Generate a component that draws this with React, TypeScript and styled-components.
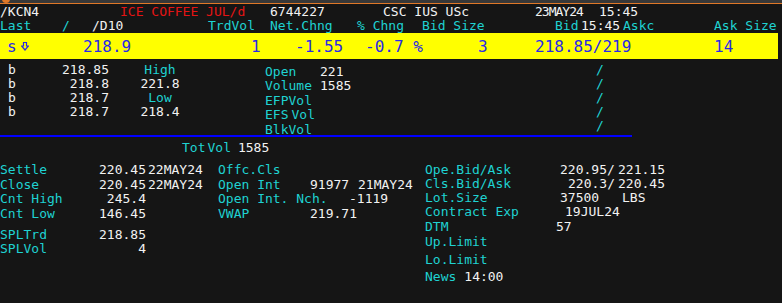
import styled, { createGlobalStyle } from 'styled-components'

const C = {
  bg: '#151515',
  cyan: '#1fd2d2',
  white: '#f2f2f2',
  red: '#e41414',
  yellow: '#ffff00',
  blue: '#2a2ae6',
  line: '#0000ff',
}

const GlobalStyle = createGlobalStyle`
  html, body {
    margin: 0;
    padding: 0;
    background: ${C.bg};
  }
  body {
    width: 782px;
    height: 303px;
    overflow: hidden;
    font-family: 'DejaVu Sans Mono', 'Liberation Mono', monospace;
    font-size: 13px;
  }
`

const Screen = styled.div`
  width: 782px;
  height: 303px;
  background: ${C.bg};
  display: flex;
  flex-direction: column;
  overflow: hidden;
`

const TopBar = styled.div`
  height: 3px;
  background: #383838;
  border-bottom: 1px solid #e07828;
  display: flex;
  flex-shrink: 0;
  overflow: hidden;

  &::before {
    content: '';
    width: 8px;
    height: 8px;
    margin: -5px 0 0 2px;
    border-radius: 50%;
    background: #e07828;
  }
`

const Row = styled.div<{ $h: number; $pl?: number }>`
  display: flex;
  align-items: center;
  height: ${(p) => p.$h}px;
  padding-left: ${(p) => p.$pl ?? 0}px;
  white-space: pre;
  flex-shrink: 0;
`

type Tone = 'cyan' | 'white' | 'red' | 'blue'

const Cell = styled.span<{ $w?: number; $c?: Tone; $align?: 'left' | 'right' | 'center'; $ml?: number }>`
  display: inline-block;
  width: ${(p) => (p.$w ? `${p.$w}px` : 'auto')};
  margin-left: ${(p) => p.$ml ?? 0}px;
  text-align: ${(p) => p.$align ?? 'left'};
  color: ${(p) => C[p.$c ?? 'white']};
  flex-shrink: 0;
`

const Narrow = styled(Cell)`
  letter-spacing: -1px;
`

const QuoteBar = styled.div`
  width: 778px;
  height: 26px;
  margin-top: 1px;
  background: ${C.yellow};
  display: flex;
  align-items: center;
  padding-left: 7px;
  box-sizing: border-box;
  font-size: 16px;
  white-space: pre;
  flex-shrink: 0;
`

const ArrowBox = styled.span`
  display: inline-flex;
  width: 63px;
  align-items: center;
  padding-left: 1px;
  box-sizing: border-box;
`

const Stats = styled.div`
  display: flex;
  height: 76px;
  flex-shrink: 0;
`

const Col = styled.div<{ $w?: number; $pt: number; $pl?: number }>`
  display: flex;
  flex-direction: column;
  width: ${(p) => (p.$w ? `${p.$w}px` : 'auto')};
  padding-top: ${(p) => p.$pt}px;
  padding-left: ${(p) => p.$pl ?? 0}px;
  box-sizing: border-box;
  flex-shrink: 0;
`

const Rule = styled.div`
  width: 632px;
  height: 2px;
  background: ${C.line};
  flex-shrink: 0;
`

const Bottom = styled.div`
  display: flex;
  padding-top: 5px;
`

const Gap = styled.div<{ $h: number }>`
  height: ${(p) => p.$h}px;
  flex-shrink: 0;
`

const DownArrow = () => (
  <svg width="8" height="9" viewBox="0 0 8 9">
    <path d="M2.5 0.5 H5.5 V4 H7.5 L4 8 L0.5 4 H2.5 Z" fill="none" stroke={C.blue} strokeWidth="1.2" />
  </svg>
)

const depth = [
  ['218.85', 'High', 'label'],
  ['218.8', '221.8', 'value'],
  ['218.7', 'Low', 'label'],
  ['218.7', '218.4', 'value'],
]

const dayStats: [string, string][] = [
  ['Open', '221'],
  ['Volume', '1585'],
  ['EFPVol', ''],
  ['EFS', ''],
  ['BlkVol', ''],
]

export default function App() {
  return (
    <Screen>
      <GlobalStyle />
      <TopBar />

      <Row $h={15}>
        <Cell $w={120}>/KCN4</Cell>
        <Cell $w={150} $c="red">ICE COFFEE JUL/d</Cell>
        <Cell $w={113}>6744227</Cell>
        <Cell $w={152}>CSC IUS USc</Cell>
        <Narrow $w={64}>23MAY24</Narrow>
        <Cell>15:45</Cell>
      </Row>

      <Row $h={13}>
        <Cell $w={62} $c="cyan">Last</Cell>
        <Cell $w={30} $c="cyan">/</Cell>
        <Cell $w={116}>/D10</Cell>
        <Cell $w={62} $c="cyan">TrdVol</Cell>
        <Cell $w={87} $c="cyan">Net.Chng</Cell>
        <Cell $w={65} $c="cyan">% Chng</Cell>
        <Cell $w={133} $c="cyan">Bid Size</Cell>
        <Cell $w={26} $c="cyan">Bid</Cell>
        <Cell $w={42}>15:45</Cell>
        <Cell $w={91} $c="cyan">Askc</Cell>
        <Cell $c="cyan">Ask Size</Cell>
      </Row>

      <QuoteBar>
        <Cell $w={13} $c="blue">s</Cell>
        <ArrowBox>
          <DownArrow />
        </ArrowBox>
        <Cell $w={168} $c="blue">218.9</Cell>
        <Cell $w={44} $c="blue">1</Cell>
        <Cell $w={70} $c="blue">-1.55</Cell>
        <Cell $w={113} $c="blue">-0.7 %</Cell>
        <Cell $w={57} $c="blue">3</Cell>
        <Cell $w={179} $c="blue">218.85/219</Cell>
        <Cell $c="blue">14</Cell>
      </QuoteBar>

      <Stats>
        <Col $w={265} $pt={3} $pl={8}>
          {depth.map(([px, right, kind], i) => (
            <Row key={i} $h={14}>
              <Cell $w={54}>b</Cell>
              <Cell $w={47} $align="right">{px}</Cell>
              <Cell $w={31} />
              <Cell $w={40} $align="center" $c={kind === 'label' ? 'cyan' : 'white'}>
                {right}
              </Cell>
            </Row>
          ))}
        </Col>
        <Col $w={331} $pt={5}>
          {dayStats.map(([label, value]) => (
            <Row key={label} $h={14.5}>
              {label === 'EFS' ? (
                <Cell $w={55} $c="cyan">
                  EFS<Cell $ml={3} $c="cyan">Vol</Cell>
                </Cell>
              ) : (
                <Cell $w={55} $c="cyan">{label}</Cell>
              )}
              <Cell>{value}</Cell>
            </Row>
          ))}
        </Col>
        <Col $pt={3}>
          {[0, 1, 2, 3, 4].map((i) => (
            <Row key={i} $h={14}>
              <Cell $c="cyan">/</Cell>
            </Row>
          ))}
        </Col>
      </Stats>

      <Rule />

      <Row $h={20} $pl={182}>
        <Cell $c="cyan">Tot</Cell>
        <Cell $c="cyan" $ml={2}>Vol</Cell>
        <Cell $ml={7}>1585</Cell>
      </Row>

      <Bottom>
        <Col $w={218} $pt={0}>
          <Row $h={14.7}>
            <Cell $w={98} $c="cyan">Settle</Cell>
            <Cell $w={48} $align="right">220.45</Cell>
            <Cell $ml={2}>22MAY24</Cell>
          </Row>
          <Row $h={14.7}>
            <Cell $w={98} $c="cyan">Close</Cell>
            <Cell $w={48} $align="right">220.45</Cell>
            <Cell $ml={2}>22MAY24</Cell>
          </Row>
          <Row $h={14.7}>
            <Cell $w={98} $c="cyan">Cnt High</Cell>
            <Cell $w={48} $align="right">245.4</Cell>
          </Row>
          <Row $h={14.7}>
            <Cell $w={98} $c="cyan">Cnt Low</Cell>
            <Cell $w={48} $align="right">146.45</Cell>
          </Row>
          <Gap $h={6} />
          <Row $h={14.7}>
            <Cell $w={98} $c="cyan">SPLTrd</Cell>
            <Cell $w={48} $align="right">218.85</Cell>
          </Row>
          <Row $h={14.7}>
            <Cell $w={98} $c="cyan">SPLVol</Cell>
            <Cell $w={48} $align="right">4</Cell>
          </Row>
        </Col>

        <Col $w={207} $pt={0}>
          <Row $h={14.7}>
            <Cell $c="cyan">Offc.Cls</Cell>
          </Row>
          <Row $h={14.7}>
            <Cell $w={92} $c="cyan">Open Int</Cell>
            <Cell $w={48}>91977</Cell>
            <Cell>21MAY24</Cell>
          </Row>
          <Row $h={14.7}>
            <Cell $w={131} $c="cyan">Open Int. Nch.</Cell>
            <Cell>-1119</Cell>
          </Row>
          <Row $h={14.7}>
            <Cell $w={92} $c="cyan">VWAP</Cell>
            <Cell>219.71</Cell>
          </Row>
        </Col>

        <Col $pt={0}>
          <Row $h={14}>
            <Cell $w={135} $c="cyan">Ope.Bid/Ask</Cell>
            <Cell $w={58}>220.95/</Cell>
            <Cell>221.15</Cell>
          </Row>
          <Row $h={14}>
            <Cell $w={143} $c="cyan">Cls.Bid/Ask</Cell>
            <Cell $w={50}>220.3/</Cell>
            <Cell>220.45</Cell>
          </Row>
          <Row $h={14}>
            <Cell $w={135} $c="cyan">Lot.Size</Cell>
            <Cell $w={62}>37500</Cell>
            <Cell>LBS</Cell>
          </Row>
          <Row $h={14}>
            <Cell $w={140} $c="cyan">Contract Exp</Cell>
            <Cell>19JUL24</Cell>
          </Row>
          <Row $h={16}>
            <Cell $w={131} $c="cyan">DTM</Cell>
            <Cell>57</Cell>
          </Row>
          <Row $h={14}>
            <Cell $c="cyan">Up.Limit</Cell>
          </Row>
          <Gap $h={4} />
          <Row $h={14}>
            <Cell $c="cyan">Lo.Limit</Cell>
          </Row>
          <Gap $h={3} />
          <Row $h={14}>
            <Cell $c="cyan">News</Cell>
            <Cell $ml={8}>14:00</Cell>
          </Row>
        </Col>
      </Bottom>
    </Screen>
  )
}
